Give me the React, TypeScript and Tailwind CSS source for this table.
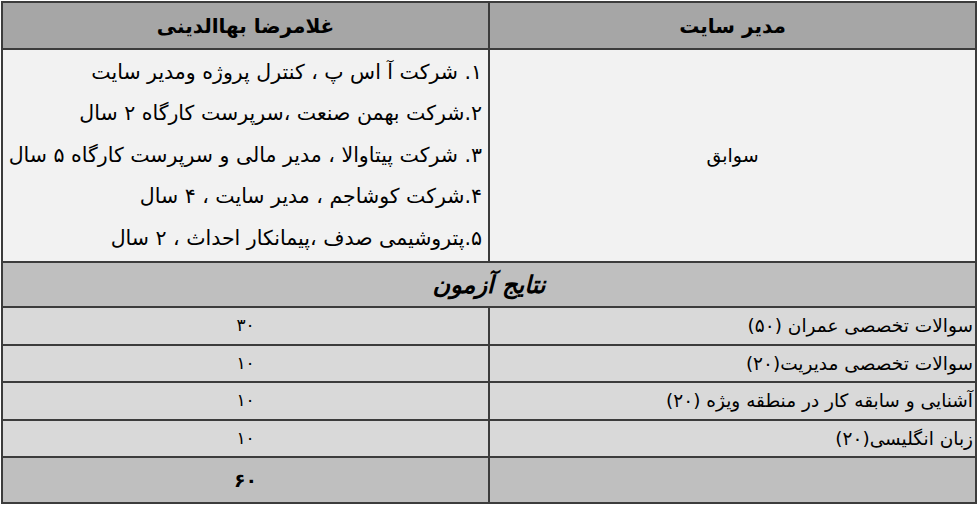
const font = { fontFamily: '"DejaVu Sans", sans-serif' }

const history = [
  '۱. شرکت آ اس پ ، کنترل پروژه ومدیر سایت',
  '۲.شرکت بهمن صنعت ،سرپرست کارگاه ۲ سال',
  '۳. شرکت پیتاوالا ، مدیر مالی و سرپرست کارگاه ۵ سال',
  '۴.شرکت کوشاجم ، مدیر سایت ، ۴ سال',
  '۵.پتروشیمی صدف ،پیمانکار احداث ، ۲ سال',
]

const results = [
  { title: 'سوالات تخصصی عمران (۵۰)', score: '۳۰', h: 'h-[38px]' },
  { title: 'سوالات تخصصی مدیریت(۲۰)', score: '۱۰', h: 'h-[37px]' },
  { title: 'آشنایی و سابقه کار در منطقه ویژه (۲۰)', score: '۱۰', h: 'h-[38px]' },
  { title: 'زبان انگلیسی(۲۰)', score: '۱۰', h: 'h-[37px]' },
]

export default function App() {
  return (
    <div className="h-[505px] w-[980px] bg-white pl-px pt-px" style={font}>
      <div dir="rtl" className="w-[976px] border-2 border-[#3c3c3c] text-black">
        <div className="grid h-[47px] grid-cols-[487px_485px] border-b-2 border-[#3c3c3c] bg-[#a6a6a6]">
          <div className="flex items-center justify-center border-l-2 border-[#3c3c3c] text-[20px] font-bold">
            مدیر سایت
          </div>
          <div className="flex items-center justify-center text-[20px] font-bold">
            غلامرضا بهاالدینی
          </div>
        </div>

        <div className="grid h-[213px] grid-cols-[487px_485px] border-b-2 border-[#3c3c3c] bg-[#f2f2f2]">
          <div className="flex items-center justify-center border-l-2 border-[#3c3c3c] text-[19px]">
            سوابق
          </div>
          <div className="flex flex-col justify-center pr-[6px] text-[20.5px] leading-[41.5px]">
            {history.map((line) => (
              <div key={line} className="whitespace-nowrap">
                {line}
              </div>
            ))}
          </div>
        </div>

        <div className="flex h-[45px] items-center justify-center border-b-2 border-[#3c3c3c] bg-[#bfbfbf] text-[24px] font-bold italic">
          نتایج آزمون
        </div>

        {results.map((r) => (
          <div
            key={r.title}
            className={`grid ${r.h} grid-cols-[487px_485px] border-b-2 border-[#3c3c3c] bg-[#d9d9d9] text-[18.5px]`}
          >
            <div className="flex items-center whitespace-nowrap border-l-2 border-[#3c3c3c] pr-[2px]">
              {r.title}
            </div>
            <div className="flex items-center justify-center text-[17px]">{r.score}</div>
          </div>
        ))}

        <div className="grid h-[44px] grid-cols-[487px_485px] bg-[#bfbfbf]">
          <div className="border-l-2 border-[#3c3c3c]" />
          <div className="flex items-center justify-center text-[19px] font-bold">
            ۶۰
          </div>
        </div>
      </div>
    </div>
  )
}
